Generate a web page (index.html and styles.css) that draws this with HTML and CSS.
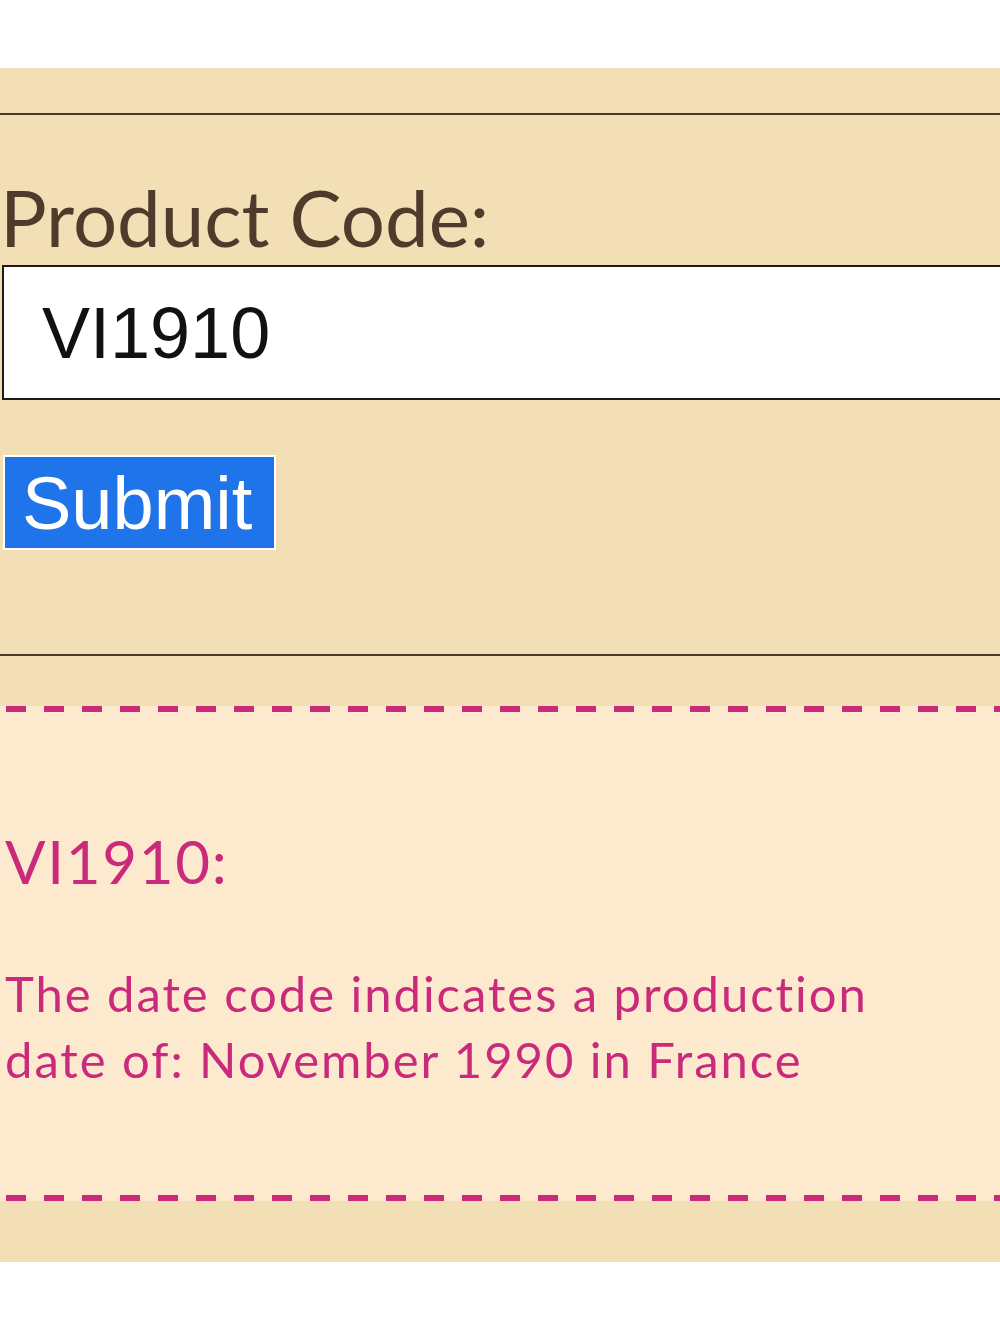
FILE: index.html
```html
<!DOCTYPE html>
<html lang="en">
<head>
<meta charset="utf-8">
<title>Date Code Lookup</title>
<link rel="stylesheet" href="styles.css">
</head>
<body>
<div class="page">
  <section class="panel">
    <form class="form">
      <label class="label" for="code">Product Code:</label>
      <input class="input" id="code" type="text" value="VI1910">
      <button class="submit" type="button">Submit</button>
    </form>
    <div class="result">
      <h2 class="result-title">VI1910:</h2>
      <p class="result-text">The date code indicates a production date of: November 1990 in France</p>
    </div>
  </section>
</div>
</body>
</html>
```

FILE: styles.css
```css
html, body {
  margin: 0;
  padding: 0;
  background: #ffffff;
}

.page {
  padding-top: 68px;
  width: 1000px;
  height: 1333px;
  box-sizing: border-box;
  overflow: hidden;
}

.panel {
  background: #f3dfb5;
  padding: 45px 0 61px 0;
  overflow: hidden;
}

.form {
  border-top: 2px solid #4a3a2b;
  border-bottom: 2px solid #4a3a2b;
  padding: 58px 0 104px 0;
  margin: 0;
}

.label {
  display: block;
  font-family: Lato, "Open Sans", sans-serif;
  font-size: 78px;
  line-height: 90px;
  color: #4e3b2c;
  margin-top: -1px;
  margin-bottom: 2px;
}

.input {
  display: block;
  box-sizing: border-box;
  margin: 3px 0 0 2px;
  width: 1020px;
  height: 135px;
  border: 2px solid #1f1a16;
  border-radius: 0;
  background: #ffffff;
  padding: 0 0 0 38px;
  font-family: "Liberation Sans", Arial, sans-serif;
  font-size: 72px;
  color: #111111;
  outline: none;
}

.submit {
  display: block;
  margin: 55px 0 0 3px;
  box-sizing: border-box;
  height: 95px;
  border: 2px solid #ffffff;
  border-radius: 0;
  background: #1f74ea;
  color: #ffffff;
  font-family: "Liberation Sans", Arial, sans-serif;
  font-size: 74px;
  line-height: 74px;
  padding: 10px 22px 7px 17px;
  cursor: pointer;
}

.result {
  margin-top: 50px;
  padding: 6px 0;
  background:
    repeating-linear-gradient(to right, #cc297b 0 20px, transparent 20px 38px) 6px 0 / 100% 6px no-repeat,
    repeating-linear-gradient(to right, #cc297b 0 20px, transparent 20px 38px) 6px 100% / 100% 6px no-repeat,
    #fde9ce;
  color: #c92a7c;
  font-family: Lato, "Open Sans", sans-serif;
  font-variant-ligatures: none;
}

.result-title {
  margin: 113px 0 0 0;
  padding-left: 5px;
  font-size: 60px;
  line-height: 72px;
  font-weight: 400;
  letter-spacing: 1.7px;
}

.result-text {
  margin: 63px 0 103px 0;
  padding-left: 5px;
  font-size: 49px;
  line-height: 66px;
  letter-spacing: 1.95px;
  width: 900px;
}
```
